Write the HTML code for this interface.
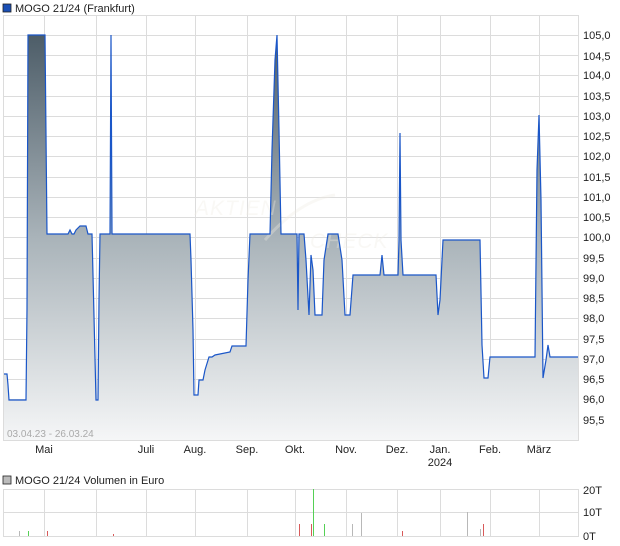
<!DOCTYPE html>
<html><head><meta charset="utf-8"><style>
html,body{margin:0;padding:0;background:#fff;width:620px;height:546px;overflow:hidden}
svg{display:block;font-family:"Liberation Sans",sans-serif}
</style></head><body>
<svg width="620" height="546" viewBox="0 0 620 546" xmlns="http://www.w3.org/2000/svg">
<defs>
<linearGradient id="g" x1="0" y1="35" x2="0" y2="440" gradientUnits="userSpaceOnUse">
<stop offset="0" stop-color="#4d5d68"/><stop offset="0.5" stop-color="#a9b3b9"/><stop offset="1" stop-color="#f5f6f7"/></linearGradient>
</defs>
<rect x="3" y="4" width="8" height="8" fill="#1a4fb5" stroke="#222" stroke-width="0.8"/>
<text x="15" y="12" font-size="11" fill="#222">MOGO 21/24 (Frankfurt)</text>
<g stroke="#dcdcdc" stroke-width="1" fill="none">
<rect x="3.5" y="15.5" width="575" height="425"/>
<path d="M4 35.5H578M4 55.5H578M4 75.5H578M4 96.5H578M4 116.5H578M4 136.5H578M4 156.5H578M4 177.5H578M4 197.5H578M4 217.5H578M4 237.5H578M4 258.5H578M4 278.5H578M4 298.5H578M4 318.5H578M4 339.5H578M4 359.5H578M4 379.5H578M4 399.5H578M4 420.5H578"/>
<path d="M44.5 15V440M96.5 15V440M146.5 15V440M195.5 15V440M247.5 15V440M295.5 15V440M346.5 15V440M397.5 15V440M440.5 15V440M490.5 15V440M539.5 15V440"/>
</g>
<path id="p" d="M4 374L7 374L8 385L9 400L26 400L27 309L28 35L45 35L47 234L68 234L70 230L72 234L74 234L76 230L80 226L86 226L88 234L92 234L93 275L95 358L96 400L98 400L99 300L100 234L110 234L111 35L112 234L190 234L191 260L193 330L194 395L198 395L199 380L203 380L205 370L209 357L212 357L215 355L230 352L232 346L246 346L248 280L250 234L270 234L272 150L275 60L277 35L279 130L281 234L297 234L298 310L299 234L304 234L306 260L309 315L311 255L313 270L315 315L322 315L324 260L328 234L338 234L342 260L345 315L350 315L353 275L380 275L382 255L384 275L398 275L399 240L400 133L401 240L403 275L436 275L438 315L440 300L443 240L480 240L482 345L484 378L488 378L490 357L535 357L537 170L539 115L541 200L543 378L546 360L548 345L550 357L578 357" fill="none"/>
<path d="M4 374L7 374L8 385L9 400L26 400L27 309L28 35L45 35L47 234L68 234L70 230L72 234L74 234L76 230L80 226L86 226L88 234L92 234L93 275L95 358L96 400L98 400L99 300L100 234L110 234L111 35L112 234L190 234L191 260L193 330L194 395L198 395L199 380L203 380L205 370L209 357L212 357L215 355L230 352L232 346L246 346L248 280L250 234L270 234L272 150L275 60L277 35L279 130L281 234L297 234L298 310L299 234L304 234L306 260L309 315L311 255L313 270L315 315L322 315L324 260L328 234L338 234L342 260L345 315L350 315L353 275L380 275L382 255L384 275L398 275L399 240L400 133L401 240L403 275L436 275L438 315L440 300L443 240L480 240L482 345L484 378L488 378L490 357L535 357L537 170L539 115L541 200L543 378L546 360L548 345L550 357L578 357L578 440L4 440Z" fill="url(#g)"/>
<g opacity="0.35">
<text x="195" y="215" font-size="21" fill="#f0ece4" font-style="italic" letter-spacing="1">AKTIEN</text>
<text x="310" y="248" font-size="21" fill="#f0ece4" font-style="italic" letter-spacing="1">CHECK</text>
<path d="M265 240Q300 200 335 195" stroke="#f0ece4" stroke-width="3" fill="none"/>
</g>
<use href="#p" stroke="#1a56c8" stroke-width="1.2"/>
<g font-size="11" fill="#222">
<text x="583" y="39">105,0</text><text x="583" y="60">104,5</text><text x="583" y="79">104,0</text><text x="583" y="100">103,5</text><text x="583" y="120">103,0</text><text x="583" y="140">102,5</text><text x="583" y="160">102,0</text><text x="583" y="181">101,5</text><text x="583" y="201">101,0</text><text x="583" y="221">100,5</text><text x="583" y="241">100,0</text><text x="583" y="262">99,5</text><text x="583" y="282">99,0</text><text x="583" y="302">98,5</text><text x="583" y="322">98,0</text><text x="583" y="343">97,5</text><text x="583" y="363">97,0</text><text x="583" y="383">96,5</text><text x="583" y="403">96,0</text><text x="583" y="424">95,5</text>
<text x="44" y="453" text-anchor="middle">Mai</text><text x="146" y="453" text-anchor="middle">Juli</text><text x="195" y="453" text-anchor="middle">Aug.</text><text x="247" y="453" text-anchor="middle">Sep.</text><text x="295" y="453" text-anchor="middle">Okt.</text><text x="346" y="453" text-anchor="middle">Nov.</text><text x="397" y="453" text-anchor="middle">Dez.</text><text x="440" y="453" text-anchor="middle">Jan.</text><text x="440" y="466" text-anchor="middle">2024</text><text x="490" y="453" text-anchor="middle">Feb.</text><text x="539" y="453" text-anchor="middle">März</text>
</g>
<text x="7" y="437" font-size="10" fill="#aaa">03.04.23 - 26.03.24</text>
<rect x="3" y="476" width="8" height="8" fill="#bbb" stroke="#222" stroke-width="0.8"/>
<text x="15" y="484" font-size="11" fill="#222">MOGO 21/24 Volumen in Euro</text>
<g stroke="#dcdcdc" stroke-width="1" fill="none">
<path d="M3 489.5H578M3 512.5H578M3 536.5H578M3.5 489V537M578.5 489V537"/>
<path d="M44.5 489V537M96.5 489V537M146.5 489V537M195.5 489V537M247.5 489V537M295.5 489V537M346.5 489V537M397.5 489V537M440.5 489V537M490.5 489V537M539.5 489V537"/>
</g>
<g stroke-width="1">
<path d="M19.5 531V536M352.5 524V536M361.5 513V536M467.5 512V536M480.5 529V536" stroke="#b8b8b8"/>
<path d="M28.5 531V536M313.5 489V536M324.5 524V536" stroke="#55d055"/>
<path d="M47.5 531V536M113.5 534V536M299.5 524V536M311.5 524V536M402.5 531V536M483.5 524V536" stroke="#d85a5a"/>
</g>
<g font-size="11" fill="#222"><text x="583" y="494">20T</text><text x="583" y="516">10T</text><text x="583" y="540">0T</text></g>
</svg>
</body></html>
